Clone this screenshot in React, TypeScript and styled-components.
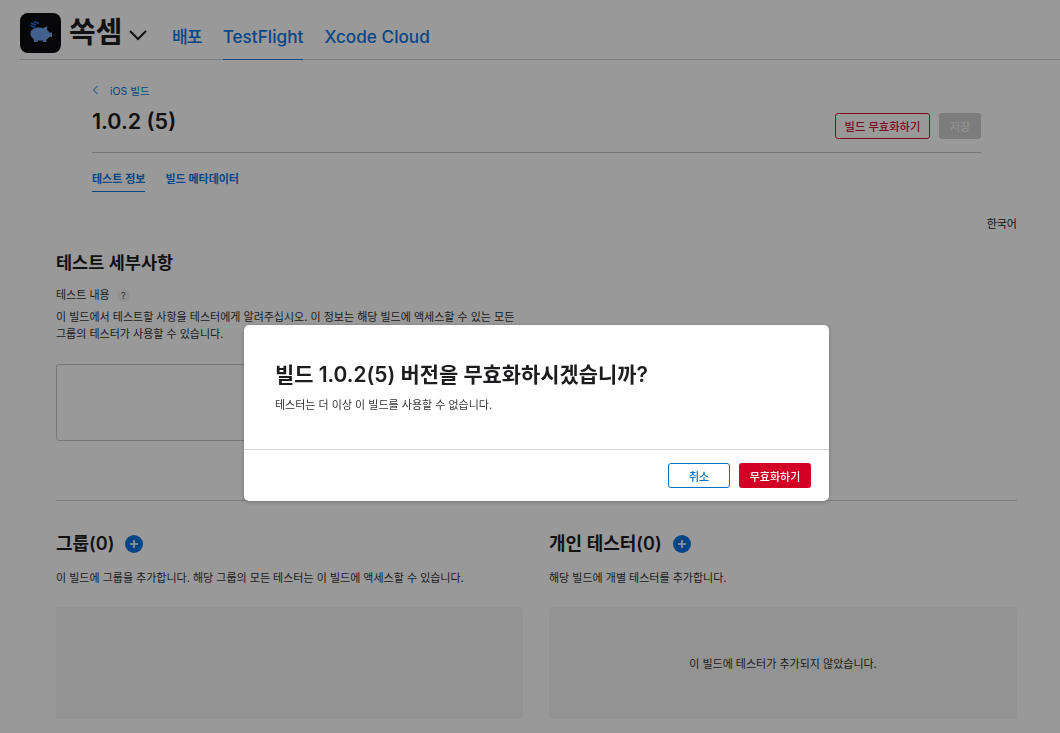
import styled, { createGlobalStyle } from 'styled-components';

const GlobalStyle = createGlobalStyle`
  html, body {
    margin: 0;
    padding: 0;
    height: 100%;
    background: #fff;
    overflow: hidden;
    font-family: Inter, "Noto Sans CJK KR", sans-serif;
    color: #1d1d1f;
  }
  * { box-sizing: border-box; }
`;

const Page = styled.div`
  width: 1060px;
  height: 733px;
  overflow: hidden;
`;

const Header = styled.header`
  display: flex;
  align-items: flex-end;
  height: 60px;
  margin-left: 20px;
  border-bottom: 1px solid #d2d2d7;
`;

const Brand = styled.div`
  display: flex;
  align-items: center;
  align-self: flex-start;
  margin-top: 13px;
  width: 152px;
`;

const AppIcon = styled.div`
  width: 41px;
  height: 40px;
  border-radius: 8px;
  background: #0d0d0f;
  display: flex;
  align-items: center;
  justify-content: center;
  margin-right: 8px;
`;

const AppName = styled.span`
  font-size: 29px;
  font-weight: 600;
  line-height: 40px;
  margin-right: 6px;
`;

const Chevron = styled.svg`
  margin-top: 4px;
`;

const NavTab = styled.a<{ $active?: boolean }>`
  display: block;
  height: 46px;
  margin-bottom: -1px;
  margin-right: 21px;
  padding-top: 10px;
  font-size: 17.2px;
  line-height: 26px;
  font-weight: 500;
  color: #0c76e0;
  border-bottom: 1px solid ${(p) => (p.$active ? '#0c76e0' : 'transparent')};
`;

const KoreanNavTab = styled(NavTab)`
  letter-spacing: -1px;
`;

const Top = styled.section`
  margin: 0 79px 0 92px;
`;

const BackLink = styled.div`
  display: flex;
  align-items: center;
  gap: 11px;
  height: 16px;
  margin-top: 22px;
  font-size: 10.5px;
  color: #0c76e0;
`;

const TitleRow = styled.div`
  display: flex;
  align-items: flex-start;
  justify-content: space-between;
  height: 55px;
  border-bottom: 1px solid #c8c8cc;
`;

const BuildTitle = styled.h1`
  margin: 0;
  padding-top: 9px;
  font-size: 21.5px;
  line-height: 28px;
  font-weight: 600;
`;

const Actions = styled.div`
  display: flex;
  gap: 9px;
  padding-top: 15px;
`;

const OutlineRed = styled.button`
  width: 95px;
  height: 26px;
  padding: 0;
  border: 1px solid #d30f3a;
  border-radius: 3px;
  background: transparent;
  color: #d30f3a;
  font: 500 11.3px Inter, "Noto Sans CJK KR", sans-serif;
`;

const SaveButton = styled.button`
  width: 42px;
  height: 26px;
  padding: 0;
  border: 0;
  border-radius: 3px;
  background: #cfcfcf;
  color: #f2f2f2;
  font: 500 11px Inter, "Noto Sans CJK KR", sans-serif;
`;

const Tabs = styled.nav`
  display: flex;
  gap: 20px;
  margin-top: 12px;
`;

const SubTab = styled.a<{ $active?: boolean }>`
  height: 27px;
  padding-top: 1px;
  font-size: 11px;
  line-height: 26px;
  font-weight: 600;
  color: #0c76e0;
  border-bottom: 1px solid ${(p) => (p.$active ? '#0c76e0' : 'transparent')};
`;

const Main = styled.main`
  margin: 0 43px 0 56px;
`;

const Locale = styled.div`
  margin-top: 24px;
  text-align: right;
  font-size: 11px;
  line-height: 16px;
`;

const SectionTitle = styled.h2`
  margin: 19px 0 0;
  font-size: 17.5px;
  line-height: 24px;
  font-weight: 600;
`;

const LabelRow = styled.div`
  display: flex;
  align-items: center;
  gap: 7px;
  margin-top: 12px;
  font-size: 11px;
  line-height: 16px;
  color: #333;
`;

const Help = styled.span`
  width: 13px;
  height: 13px;
  border-radius: 50%;
  background: #f0f0f2;
  font-size: 9px;
  line-height: 13px;
  text-align: center;
  color: #555;
`;

const Hint = styled.p`
  width: 467px;
  margin: 6px 0 0;
  font-size: 11px;
  line-height: 17px;
  color: #333;
`;

const TextBox = styled.div`
  width: 467px;
  height: 77px;
  margin-top: 21px;
  border: 1px solid #c8c8cc;
  border-radius: 3px;
`;

const Divider = styled.hr`
  margin: 59px 0 0;
  border: 0;
  border-top: 1px solid #d2d2d7;
`;

const Columns = styled.div`
  display: grid;
  grid-template-columns: 467px 468px;
  column-gap: 26px;
  margin-top: 30px;
`;

const Column = styled.div`
  display: flex;
  flex-direction: column;
`;

const GroupHeading = styled.div`
  display: flex;
  align-items: center;
  gap: 11px;
  height: 26px;
`;

const GroupTitle = styled.h3`
  margin: 0;
  font-size: 18px;
  font-weight: 600;
  line-height: 24px;
`;

const AddButton = styled.span`
  width: 18px;
  height: 18px;
  border-radius: 50%;
  background: #0c76e0;
  display: flex;
  align-items: center;
  justify-content: center;
`;

const GroupHint = styled.p`
  margin: 13px 0 0;
  font-size: 11px;
  line-height: 16px;
  color: #333;
`;

const EmptyPanel = styled.div`
  height: 112px;
  margin-top: 21px;
  border-radius: 3px;
  background: #f5f5f7;
  display: flex;
  align-items: center;
  justify-content: center;
  font-size: 11px;
  color: #333;
`;

const Overlay = styled.div`
  position: fixed;
  inset: 0;
  padding: 325px 0 0 244px;
  background: rgba(0, 0, 0, 0.4);
`;

const Modal = styled.div`
  width: 585px;
  height: 176px;
  border-radius: 5px;
  background: #fff;
  box-shadow: 0 1px 4px rgba(0, 0, 0, 0.25);
  display: flex;
  flex-direction: column;
`;

const ModalBody = styled.div`
  height: 125px;
  padding: 33px 31px 0;
  border-bottom: 1px solid #d2d2d7;
`;

const ModalTitle = styled.h2`
  margin: 2px 0 0;
  font-size: 20.9px;
  line-height: 30px;
  font-weight: 600;
`;

const ModalText = styled.p`
  margin: 7px 0 0;
  font-size: 11px;
  line-height: 16px;
  color: #333;
`;

const ModalFooter = styled.div`
  display: flex;
  justify-content: flex-end;
  gap: 9px;
  padding: 13px 18px 0 0;
`;

const CancelButton = styled.button`
  width: 62px;
  height: 25px;
  padding: 0;
  border: 1px solid #0070c9;
  border-radius: 3px;
  background: #fff;
  color: #0070c9;
  font: 500 11px Inter, "Noto Sans CJK KR", sans-serif;
`;

const ConfirmButton = styled.button`
  width: 72px;
  height: 25px;
  padding: 0;
  border: 0;
  border-radius: 3px;
  background: #d30025;
  color: #fff;
  font: 500 11px Inter, "Noto Sans CJK KR", sans-serif;
`;

function PiggyIcon() {
  return (
    <svg width="26" height="24" viewBox="0 0 26 24">
      <path
        d="M2.500 12.500c0-3.600 3.800-6 8.500-6 1.700 0 3.200.3 4.500.8C16.600 6.200 18 5.600 19.500 5.500l-.5 3.300c1 .8 1.700 1.700 2.100 2.700H24v4.500h-2.700c-.7 1.100-1.600 2-2.800 2.600V21h-3.600v-1.600H9.700V21H6v-2.800c-2.200-1.300-3.500-3.300-3.500-5.700z"
        fill="#6fa0e8"
      />
      <path d="M3 2l5 2M2.500 4.500l5 2M6 .5l5 2" stroke="#1f6fe0" strokeWidth="1.500" />
    </svg>
  );
}

function PlusIcon() {
  return (
    <svg width="10" height="10" viewBox="0 0 10 10">
      <path d="M5 1v8M1 5h8" stroke="#fff" strokeWidth="1.600" />
    </svg>
  );
}

export default function App() {
  return (
    <Page>
      <GlobalStyle />
      <Header>
        <Brand>
          <AppIcon>
            <PiggyIcon />
          </AppIcon>
          <AppName>쏙셈</AppName>
          <Chevron width="20" height="12" viewBox="0 0 20 12">
            <path d="M2 2l8 8 8-8" fill="none" stroke="#1d1d1f" strokeWidth="2" />
          </Chevron>
        </Brand>
        <KoreanNavTab>배포</KoreanNavTab>
        <NavTab $active>TestFlight</NavTab>
        <NavTab>Xcode Cloud</NavTab>
      </Header>

      <Top>
        <BackLink>
          <svg width="7" height="10" viewBox="0 0 7 10">
            <path d="M5.500 1L1.500 5l4 4" fill="none" stroke="#0c76e0" strokeWidth="1" />
          </svg>
          iOS 빌드
        </BackLink>
        <TitleRow>
          <BuildTitle>1.0.2 (5)</BuildTitle>
          <Actions>
            <OutlineRed>빌드 무효화하기</OutlineRed>
            <SaveButton>저장</SaveButton>
          </Actions>
        </TitleRow>
        <Tabs>
          <SubTab $active>테스트 정보</SubTab>
          <SubTab>빌드 메타데이터</SubTab>
        </Tabs>
      </Top>

      <Main>
        <Locale>한국어</Locale>
        <SectionTitle>테스트 세부사항</SectionTitle>
        <LabelRow>
          테스트 내용 <Help>?</Help>
        </LabelRow>
        <Hint>
          이 빌드에서 테스트할 사항을 테스터에게 알려주십시오. 이 정보는 해당 빌드에 액세스할 수 있는 모든
          그룹의 테스터가 사용할 수 있습니다.
        </Hint>
        <TextBox />
        <Divider />
        <Columns>
          <Column>
            <GroupHeading>
              <GroupTitle>그룹(0)</GroupTitle>
              <AddButton>
                <PlusIcon />
              </AddButton>
            </GroupHeading>
            <GroupHint>이 빌드에 그룹을 추가합니다. 해당 그룹의 모든 테스터는 이 빌드에 액세스할 수 있습니다.</GroupHint>
            <EmptyPanel />
          </Column>
          <Column>
            <GroupHeading>
              <GroupTitle>개인 테스터(0)</GroupTitle>
              <AddButton>
                <PlusIcon />
              </AddButton>
            </GroupHeading>
            <GroupHint>해당 빌드에 개별 테스터를 추가합니다.</GroupHint>
            <EmptyPanel>이 빌드에 테스터가 추가되지 않았습니다.</EmptyPanel>
          </Column>
        </Columns>
      </Main>

      <Overlay>
        <Modal>
          <ModalBody>
            <ModalTitle>빌드 1.0.2(5) 버전을 무효화하시겠습니까?</ModalTitle>
            <ModalText>테스터는 더 이상 이 빌드를 사용할 수 없습니다.</ModalText>
          </ModalBody>
          <ModalFooter>
            <CancelButton>취소</CancelButton>
            <ConfirmButton>무효화하기</ConfirmButton>
          </ModalFooter>
        </Modal>
      </Overlay>
    </Page>
  );
}
